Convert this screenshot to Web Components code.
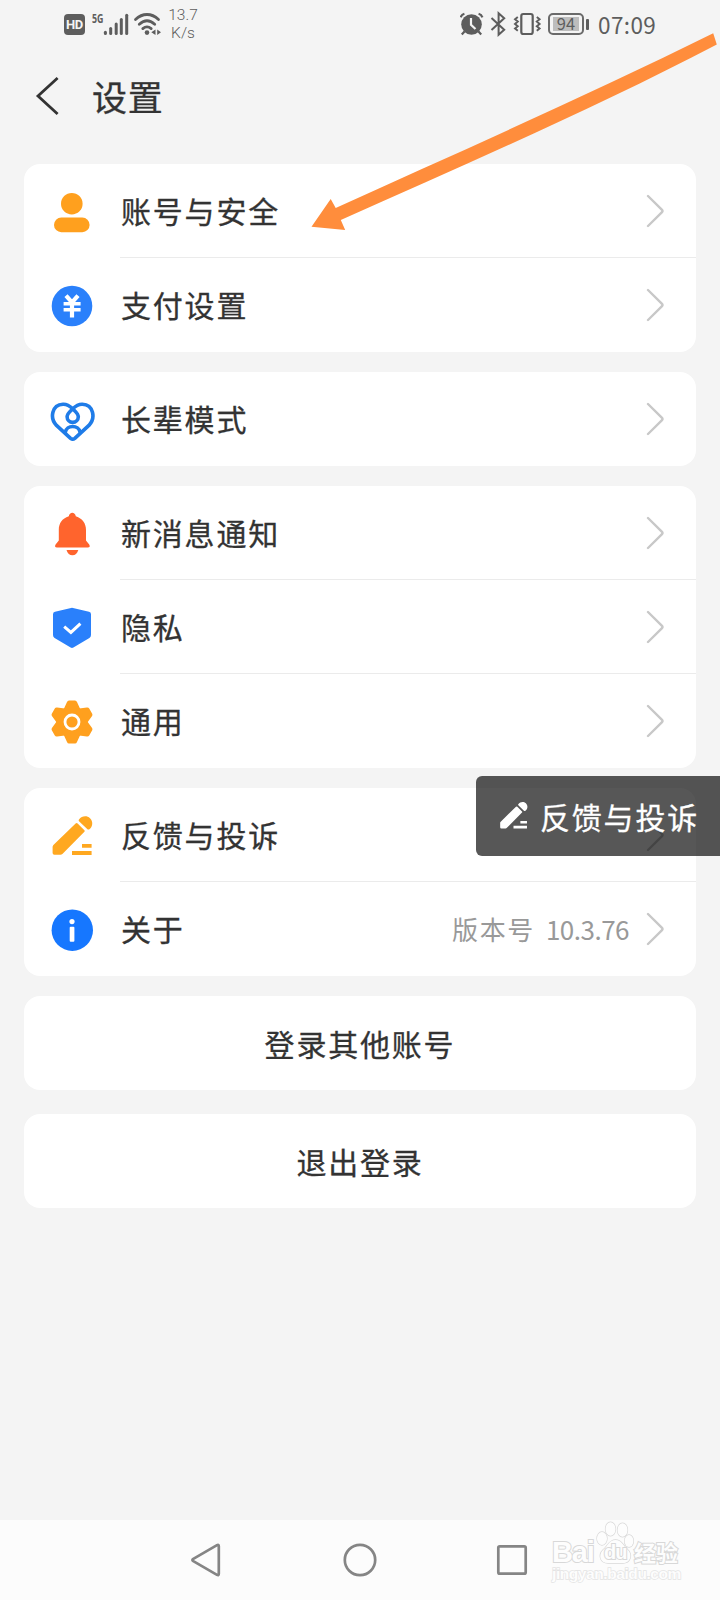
<!DOCTYPE html>
<html lang="zh-CN">
<head>
<meta charset="utf-8">
<title>设置</title>
<style>
  body {
    margin: 0;
    background: #f4f4f4;
    color: #333;
    font-family: "Noto Sans CJK SC", sans-serif;
  }
</style>
</head>
<body>
<settings-page>
  <status-bar slot="status" time="07:09" battery="94" speed="13.7" unit="K/s"></status-bar>
  <title-bar slot="header">设置</title-bar>

  <settings-card>
    <settings-row icon="person">账号与安全</settings-row>
    <settings-row icon="yen">支付设置</settings-row>
  </settings-card>
  <settings-card>
    <settings-row icon="heart">长辈模式</settings-row>
  </settings-card>
  <settings-card>
    <settings-row icon="bell">新消息通知</settings-row>
    <settings-row icon="shield">隐私</settings-row>
    <settings-row icon="gear">通用</settings-row>
  </settings-card>
  <settings-card>
    <settings-row icon="pencil">反馈与投诉</settings-row>
    <settings-row icon="info">关于<span slot="value">版本号</span><span slot="number">10.3.76</span></settings-row>
  </settings-card>
  <settings-card><action-row>登录其他账号</action-row></settings-card>
  <settings-card style="margin-top: 4px"><action-row>退出登录</action-row></settings-card>

  <nav-bar slot="nav"></nav-bar>
  <feedback-toast slot="overlay">反馈与投诉</feedback-toast>
  <pointer-arrow slot="overlay"></pointer-arrow>
  <water-mark slot="overlay"></water-mark>
</settings-page>

<script>
const PENCIL = `
  <path d="M29.6 12.4 36.4 19.2Q37.2 20 36.4 20.8L14.4 43Q13.6 43.8 12.4 43.8H6.4Q4.6 43.8 4.6 42V36Q4.6 34.8 5.4 34L27.6 12.4Q28.6 11.4 29.6 12.4Z"/>
  <path d="M31 8.5C33.6 5 38.6 4 42 7.2 45.4 10.6 44.8 15.6 41.4 18.2Q40.2 19 39.2 18L31 10.2Q30.2 9.4 31 8.5Z"/>
  <path d="M34 33h9.6v3.8H34zM24 40h19.6v4H24z"/>`

const TOOTH = 'M15.8 12 19 4.9Q19.6 3.4 21 3.4H27Q28.4 3.4 29 4.9L32.2 12Z'

const ICONS = {
  person: `<g fill="#ffa01e"><circle cx="23.8" cy="16.7" r="10.8"/><rect x="6" y="30.6" width="35.6" height="14.6" rx="7.3"/></g>`,
  yen: `<circle cx="24" cy="25" r="20.3" fill="#2a80fb"/>
    <g fill="none" stroke="#fff" stroke-width="4.2"><path d="M18 14.6 24 21.4 30 14.6M24 21V36.4"/><path d="M15.6 22.8H32.6M15.6 28.8H32.6" stroke-width="3.4"/></g>`,
  heart: `<g fill="none" stroke="#1f7ce8" stroke-width="3.6" stroke-linejoin="round" stroke-linecap="round">
    <path d="M22.6 43.3 8.5 30.4C1.5 23 3.8 9.7 15 9.2 19.2 9 21.7 10.8 24.7 13.8 27.6 16.8 30.3 18.6 30.3 21.8A5.6 5.6 0 0 1 19.1 21.8C19.1 18.6 21.8 16.8 24.7 13.8 27.7 10.8 30.2 9 34.4 9.2 45.6 9.7 47.9 23 40.9 30.4L26.8 43.3Q24.7 45 22.6 43.3Z"/>
    <path d="M17.3 37.3C18.6 29.6 30.8 29.6 32.1 37.3"/></g>`,
  bell: `<g fill="#ff642d"><path d="M20.8 7.3C21.4 2.6 27.2 2.6 27.8 7.3 34.5 9.5 38 14.5 38 21V31.5L41.2 35.6Q42.8 38.6 39.8 38.6H9Q6 38.6 7.6 35.6L10.8 31.5V21C10.8 14.5 14 9.5 20.8 7.3Z"/><path d="M18.5 41H30.3C29.3 44.6 27.2 46.2 24.4 46.2S19.5 44.6 18.5 41Z"/></g>`,
  shield: `<path d="M23 5Q24 4.7 25 5L41 8.8Q43 9.3 43 11.2V32Q43 34 41.4 34.9L25.4 44.6Q24 45.5 22.6 44.6L6.6 34.9Q5 34 5 32V11.2Q5 9.3 7 8.8Z" fill="#2a80fb"/>
    <path d="M16.2 23.6 22.9 29.4 32.4 20.6" fill="none" stroke="#fff" stroke-width="3"/>`,
  gear: `<g fill="#ffa01e"><circle cx="24" cy="25" r="15.5"/>
    ${[0, 60, 120, 180, 240, 300].map(a => `<path d="${TOOTH}" transform="rotate(${a} 24 25)"/>`).join('')}</g>
    <circle cx="24" cy="25" r="7" fill="none" stroke="#fff" stroke-width="2.8"/>`,
  pencil: `<g fill="#ffa820">${PENCIL}</g>`,
  info: `<circle cx="24.3" cy="25.2" r="20.7" fill="#1677ff"/><circle cx="24" cy="16.6" r="2.6" fill="#fff"/><rect x="21.7" y="21.8" width="4.7" height="15" rx="1" fill="#fff"/>`,
}

class BaseElement extends HTMLElement {
  connectedCallback() {
    if (this.shadowRoot) return
    this.attachShadow({mode: 'open'}).innerHTML = this.render()
  }
}

class SettingsPage extends BaseElement {
  render() {
    return `
    <style>
      :host {
        position: relative;
        display: flex;
        flex-direction: column;
        width: 720px;
        height: 1600px;
        overflow: hidden;
      }
      main {
        flex: 1;
        display: flex;
        flex-direction: column;
        gap: 20px;
        padding: 20px 24px 0;
      }
    </style>
    <slot name="status"></slot>
    <slot name="header"></slot>
    <main><slot></slot></main>
    <slot name="nav"></slot>
    <slot name="overlay"></slot>`
  }
}

class StatusBar extends BaseElement {
  render() {
    const bars = [[104.7, 31], [110, 27.3], [115.5, 22.7], [120.6, 18.3], [126, 14]]
    return `
    <style>
      :host {
        display: flex;
        align-items: center;
        height: 48px;
        padding: 0 64px;
        color: #5d5d5d;
      }
      svg { display: block; flex: none; }
      .hd {
        width: 21px;
        height: 21px;
        margin-top: 1px;
        border-radius: 4px;
        background: #5d5d5d;
        color: #f4f4f4;
        font: bold 13px/21px Roboto, sans-serif;
        letter-spacing: -.3px;
        text-align: center;
      }
      .net {
        align-self: flex-start;
        width: 11px;
        margin: 11px 0 0 7px;
        font: bold 13px/14px "Open Sans", sans-serif;
      }
      .net span { display: inline-block; transform: scaleX(.68); transform-origin: 0 0; }
      .speed {
        width: 30px;
        margin-left: 7px;
        font: 300 15.5px/18px Roboto, sans-serif;
        text-align: center;
      }
      .right { display: flex; align-items: center; margin-left: auto; }
      .battery {
        box-sizing: border-box;
        width: 36px;
        height: 22px;
        padding: 2px 3px;
        border: 2px solid #6a6a6a;
        border-radius: 5px;
      }
      .battery div {
        width: 26px;
        height: 14px;
        background: #bdbdbd;
        font: 16.5px/13px "Noto Sans CJK SC", sans-serif;
        text-align: center;
      }
      .tip { width: 3px; height: 11px; margin-left: 2px; border-radius: 1px; background: #5d5d5d; }
      .time {
        width: 58px;
        margin-left: 9px;
        padding-bottom: 1px;
        font: 22.5px/30px "Noto Sans CJK SC", sans-serif;
        letter-spacing: .4px;
      }
    </style>
    <div class="hd">HD</div>
    <div class="net"><span>5G</span></div>
    <svg width="58" height="48" viewBox="103 0 58 48" fill="none" stroke="#5d5d5d" stroke-linecap="round">
      ${bars.map(([x, y]) => `<path d="M${x + .7} ${y + 1.3}V33.6" stroke-width="3"/>`).join('')}
      <path d="M135.5 19.5C142.5 12.8 151.5 12.8 158.5 19.5M139.3 24.3C144.5 19.5 149.5 19.5 154.7 24.3M142.8 28.6C145.7 26.2 148.3 26.2 151.2 28.6" stroke-width="2.8"/>
      <circle cx="147" cy="32.6" r="2.3" fill="#5d5d5d" stroke="none"/>
      <path d="M155.5 29.5V35L151.3 32.2ZM157.2 29.5V35L161 32.2Z" fill="#5d5d5d" stroke="none"/>
    </svg>
    <div class="speed">${this.getAttribute('speed')}<br>${this.getAttribute('unit')}</div>
    <div class="right">
      <svg width="88" height="48" viewBox="460 0 88 48" fill="none" stroke="#5d5d5d" stroke-width="2.2">
        <circle cx="471.5" cy="24.5" r="10.3" fill="#5d5d5d" stroke="none"/>
        <path d="M464.5 31.5 461.8 34.5M478.5 31.5 481.2 34.5M460.6 17.3Q461.5 14.6 464.4 13.7M482.4 17.3Q481.5 14.6 478.6 13.7"/>
        <path d="M471 18V24.7L475.5 29" stroke="#f4f4f4"/>
        <path d="M491.5 18 504.2 29.8 498.6 34.7V13.3L504.2 18.2 491.5 30" stroke-width="2"/>
        <rect x="521.3" y="14" width="11.4" height="20" rx="2"/>
        <path d="M517.8 17 515 19.3 517.8 21.6 515 23.9 517.8 26.2 515 28.5 517.8 30.8M536.8 17 539.6 19.3 536.8 21.6 539.6 23.9 536.8 26.2 539.6 28.5 536.8 30.8" stroke-width="1.9"/>
      </svg>
      <div class="battery"><div>${this.getAttribute('battery')}</div></div>
      <div class="tip"></div>
      <div class="time">${this.getAttribute('time')}</div>
    </div>`
  }
}

class TitleBar extends BaseElement {
  render() {
    return `
    <style>
      :host {
        display: flex;
        align-items: center;
        gap: 32px;
        height: 96px;
        padding-left: 34px;
        font-size: 35px;
        line-height: 48px;
        -webkit-text-stroke: .3px #333;
      }
      svg { display: block; }
      span { padding-bottom: 1px; letter-spacing: .8px; }
    </style>
    <svg width="26" height="40" fill="none" stroke="#333" stroke-width="2.8"><path d="M23.6 2 4 20 23.6 38"/></svg>
    <span><slot></slot></span>`
  }
}

class SettingsCard extends BaseElement {
  render() {
    return `
    <style>
      :host {
        display: block;
        flex: none;
        overflow: hidden;
        border-radius: 16px;
        background: #fff;
      }
      ::slotted(:not(:last-child)) { --line: #ebebeb; }
    </style>
    <slot></slot>`
  }
}

class SettingsRow extends BaseElement {
  render() {
    return `
    <style>
      :host {
        display: flex;
        align-items: center;
        gap: 24px;
        height: 94px;
        padding-left: 24px;
      }
      svg { display: block; flex: none; }
      .body {
        box-sizing: border-box;
        flex: 1;
        display: flex;
        align-items: center;
        height: 94px;
        padding-right: 32px;
        border-bottom: 1px solid var(--line, transparent);
      }
      .label {
        flex: 1;
        padding: 0 0 1px 1px;
        font-size: 30px;
        line-height: 44px;
        letter-spacing: 1.8px;
        -webkit-text-stroke: .3px #333;
      }
      .value { color: #999; font-size: 26px; line-height: 36px; letter-spacing: 1.6px; }
      .number { color: #999; font-size: 26px; line-height: 36px; letter-spacing: -.5px; margin: 0 17px 0 11px; }
      .chevron { margin-top: 1px; }
    </style>
    <svg width="48" height="48">${ICONS[this.getAttribute('icon')]}</svg>
    <div class="body">
      <div class="label"><slot></slot></div>
      <div class="value"><slot name="value"></slot></div>
      <div class="number"><slot name="number"></slot></div>
      <svg class="chevron" width="18" height="34" fill="none" stroke="#c8c8c8" stroke-width="2.4" stroke-linecap="round"><path d="M2 2 16 15.8Q17 17 16 18.2L2 32"/></svg>
    </div>`
  }
}

class ActionRow extends BaseElement {
  render() {
    return `
    <style>
      :host {
        display: flex;
        align-items: center;
        justify-content: center;
        height: 94px;
        font-size: 30px;
        letter-spacing: 1.8px;
        -webkit-text-stroke: .3px #333;
      }
      span { padding-bottom: 1px; }
    </style>
    <span><slot></slot></span>`
  }
}

class NavBar extends BaseElement {
  render() {
    return `
    <style>
      :host {
        display: grid;
        grid-template-columns: repeat(3, 152px);
        justify-content: center;
        justify-items: center;
        align-items: center;
        height: 80px;
        background: #fcfcfc;
      }
      svg { display: block; fill: none; stroke: #858585; stroke-width: 2.7; stroke-linejoin: round; }
    </style>
    <svg width="36" height="36"><path d="M27 3.2Q28.8 2.3 28.8 4.2V31.8Q28.8 33.7 27 32.8L3.3 19.2Q1.4 18 3.3 16.8Z"/></svg>
    <svg width="36" height="36"><circle cx="18" cy="18" r="15.2"/></svg>
    <svg width="36" height="36"><rect x="4.3" y="4.3" width="27.4" height="27.4" rx="1.5"/></svg>`
  }
}

class FeedbackToast extends BaseElement {
  render() {
    return `
    <style>
      :host {
        position: absolute;
        top: 776px;
        right: 0;
        box-sizing: border-box;
        display: flex;
        align-items: center;
        gap: 10px;
        width: 244px;
        height: 80px;
        padding-left: 21px;
        border-radius: 6px 0 0 6px;
        background: rgba(0, 0, 0, .66);
        color: #fff;
        font-size: 30px;
        line-height: 44px;
        letter-spacing: 1.8px;
        white-space: nowrap;
        -webkit-text-stroke: .3px #fff;
      }
      svg { display: block; flex: none; fill: #fff; }
      span { padding-bottom: 1px; }
    </style>
    <svg width="33" height="33" viewBox="0 2.5 48 48">${PENCIL}</svg>
    <span><slot></slot></span>`
  }
}

class PointerArrow extends BaseElement {
  render() {
    return `
    <style>
      :host { position: absolute; top: 0; left: 0; pointer-events: none; }
      svg { display: block; }
    </style>
    <svg width="720" height="240"><path d="M311.5 226.7 330.7 199 335.7 208C460 151.5 590 94.5 713.2 33.3L716.8 44.4C594 108.5 465 164.5 340.8 220L345.2 230Z" fill="#ff8d3c"/></svg>`
  }
}

class WaterMark extends BaseElement {
  render() {
    return `
    <style>
      :host {
        position: absolute;
        left: 552px;
        top: 1520px;
        width: 130px;
        color: #fdfdfd;
        paint-order: stroke fill;
        -webkit-text-stroke: 2px #d8d8d8;
      }
      .brand { display: flex; align-items: flex-end; height: 44px; }
      .bai { width: 44px; font: bold 29px/24px "Liberation Sans", sans-serif; letter-spacing: -1.2px; }
      .paw { position: relative; width: 38px; height: 44px; }
      .paw svg { display: block; }
      .paw span {
        position: absolute;
        left: 8px;
        bottom: 2px;
        font: bold 20px/20px "Liberation Sans", sans-serif;
        letter-spacing: -1px;
      }
      .cn { font: bold 22px/25px "Noto Sans CJK SC", sans-serif; }
      .url {
        font: bold 15.5px/19px "Liberation Sans", sans-serif;
        letter-spacing: -.42px;
        white-space: nowrap;
        -webkit-text-stroke: 1.4px #e4e4e4;
      }
    </style>
    <div class="brand">
      <span class="bai">Bai</span>
      <span class="paw">
        <svg width="38" height="44" fill="#fdfdfd" stroke="#d8d8d8" stroke-width="1.3">
          <ellipse cx="6" cy="18.5" rx="5" ry="6.5"/><ellipse cx="14.5" cy="9" rx="5" ry="6.8"/>
          <ellipse cx="26.5" cy="10" rx="5" ry="6.8"/><ellipse cx="33" cy="21" rx="4.4" ry="6"/>
          <path d="M19.5 20C26 20 27 26 31 29 37.5 35 34 43 27 43H12C4 43 2 35 7 30 12 26 13 20 19.5 20Z"/>
        </svg>
        <span>du</span>
      </span>
      <span class="cn">经验</span>
    </div>
    <div class="url">jingyan.baidu.com</div>`
  }
}

customElements.define('settings-page', SettingsPage)
customElements.define('status-bar', StatusBar)
customElements.define('title-bar', TitleBar)
customElements.define('settings-card', SettingsCard)
customElements.define('settings-row', SettingsRow)
customElements.define('action-row', ActionRow)
customElements.define('nav-bar', NavBar)
customElements.define('feedback-toast', FeedbackToast)
customElements.define('pointer-arrow', PointerArrow)
customElements.define('water-mark', WaterMark)
</script>
</body>
</html>
